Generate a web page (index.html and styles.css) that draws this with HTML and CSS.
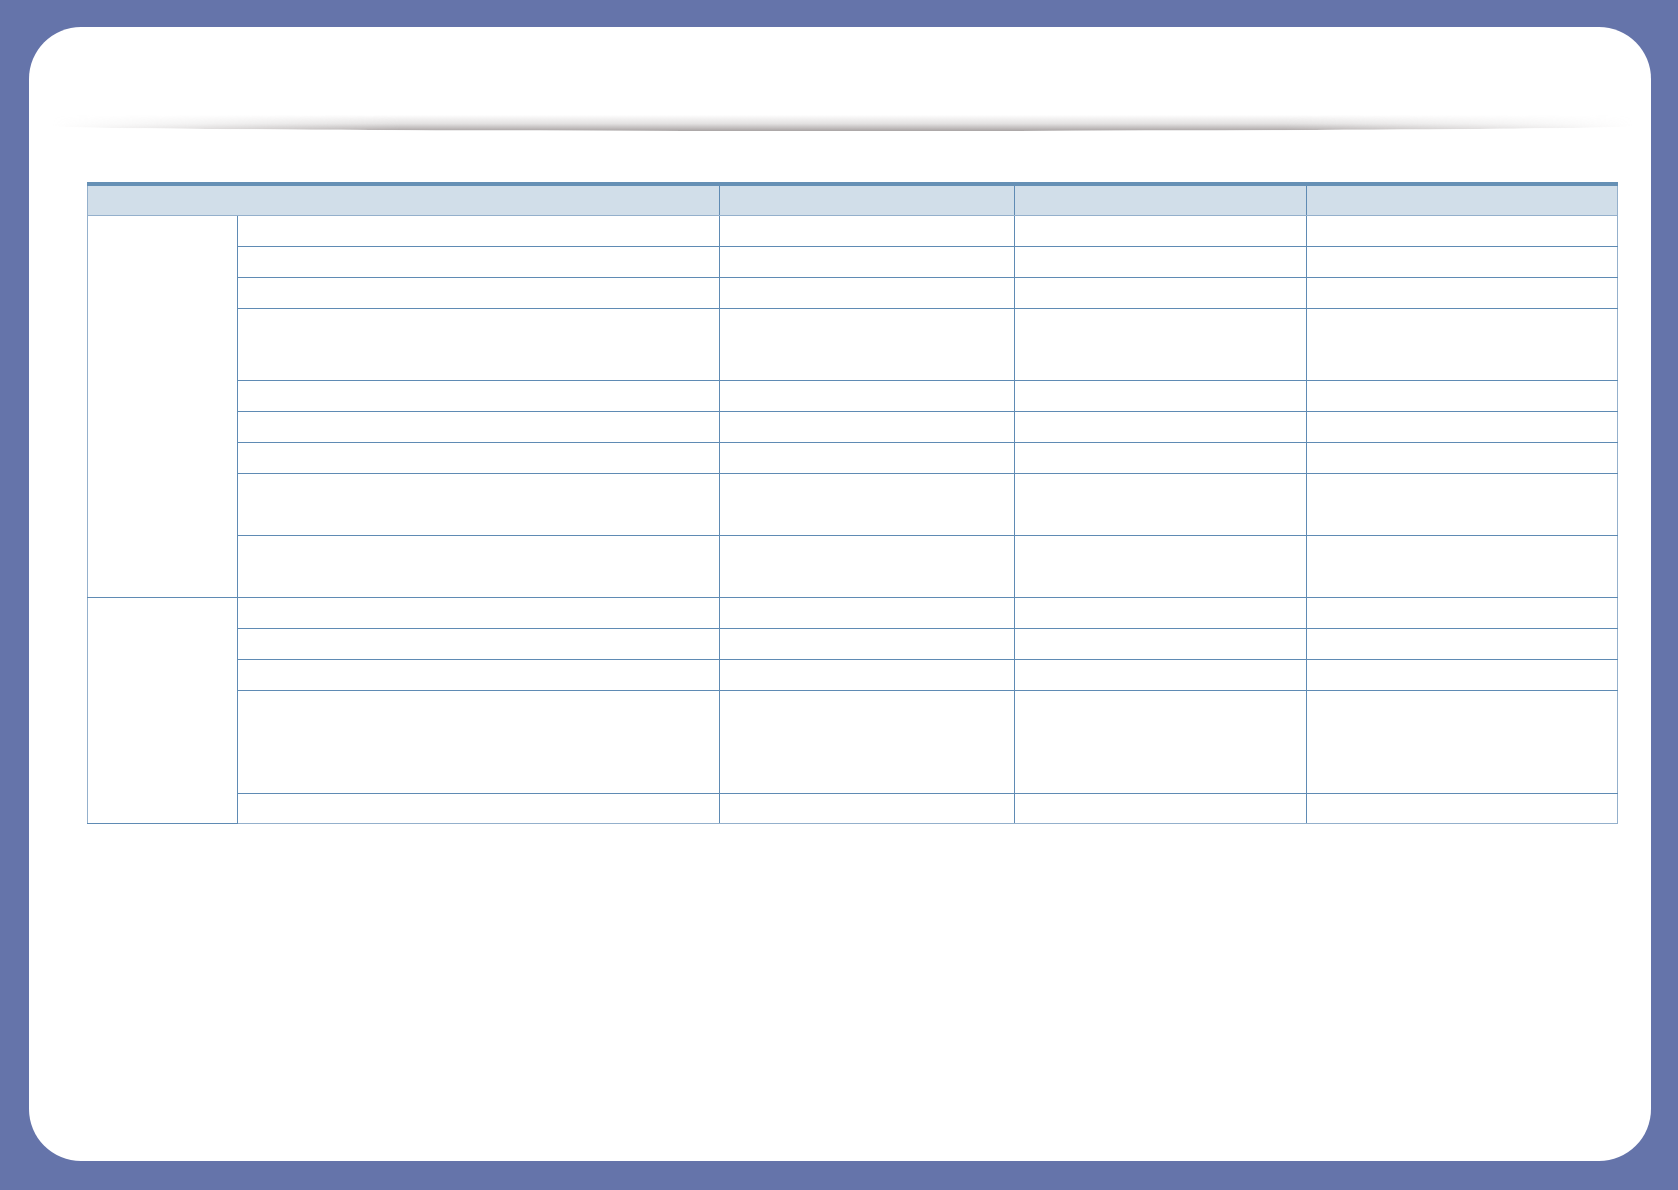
FILE: index.html
```html
<!DOCTYPE html>
<html lang="en">

<head>
    <meta charset="UTF-8">
    <title>Tabel</title>
    <link rel="stylesheet" href="styles.css">
</head>

<body>

    <div class="side">

        <div class="skygge"></div>

        <table class="tabel">
            <colgroup>
                <col class="k1">
                <col class="k2">
                <col class="k3">
                <col class="k4">
                <col class="k5">
            </colgroup>
            <thead>
                <tr>
                    <th colspan="2"></th>
                    <th></th>
                    <th></th>
                    <th></th>
                </tr>
            </thead>
            <tbody>
                <!-- gruppe 1 -->
                <tr class="r31">
                    <td class="gruppe" rowspan="9"></td>
                    <td></td><td></td><td></td><td></td>
                </tr>
                <tr class="r31"><td></td><td></td><td></td><td></td></tr>
                <tr class="r31"><td></td><td></td><td></td><td></td></tr>
                <tr class="r72"><td></td><td></td><td></td><td></td></tr>
                <tr class="r31"><td></td><td></td><td></td><td></td></tr>
                <tr class="r31"><td></td><td></td><td></td><td></td></tr>
                <tr class="r31"><td></td><td></td><td></td><td></td></tr>
                <tr class="r62"><td></td><td></td><td></td><td></td></tr>
                <tr class="r62"><td></td><td></td><td></td><td></td></tr>

                <!-- gruppe 2 -->
                <tr class="r31">
                    <td class="gruppe" rowspan="5"></td>
                    <td></td><td></td><td></td><td></td>
                </tr>
                <tr class="r31"><td></td><td></td><td></td><td></td></tr>
                <tr class="r31"><td></td><td></td><td></td><td></td></tr>
                <tr class="r103"><td></td><td></td><td></td><td></td></tr>
                <tr class="r30"><td></td><td></td><td></td><td></td></tr>
            </tbody>
        </table>

    </div>

</body>

</html>
```

FILE: styles.css
```css
* {
    margin: 0;
    padding: 0;
    box-sizing: border-box;
}

body {
    background-color: #6574aa;
    font-family: "Liberation Sans", Arial, sans-serif;
    height: 1190px;
    overflow: hidden;
}

.side {
    margin: 27px 27px 29px 29px;
    height: 1134px;
    background-color: #ffffff;
    border-radius: 52px;
    padding-top: 88px;
}

/* graa skygge under toppen */
.skygge {
    margin: 0 18px 0 23px;
    height: 16px;
    background: linear-gradient(to bottom, rgba(190, 186, 186, 0) 0%, rgba(190, 186, 186, 0.45) 55%, #b3aeae 92%, #a9a5a5 100%);
    border-radius: 0 0 50% 50% / 0 0 5px 5px;
    -webkit-mask-image: linear-gradient(to right, transparent 0%, #000 22%, #000 78%, transparent 100%);
    mask-image: linear-gradient(to right, transparent 0%, #000 22%, #000 78%, transparent 100%);
}

.tabel {
    margin: 51px 0 0 58px;
    width: 1530px;
    border-collapse: collapse;
    table-layout: fixed;
}

.k1 { width: 150px; }
.k2 { width: 482px; }
.k3 { width: 295px; }
.k4 { width: 292px; }
.k5 { width: 311px; }

.tabel th {
    height: 31px;
    background-color: #d1dee9;
    border-top: 4px solid #6690b5;
    border-bottom: 1px solid #94b0cc;
    border-left: 1px solid #5f8bb4;
    border-right: 1px solid #5f8bb4;
}

.tabel th:first-child {
    border-left: 1px solid #94b0cc;
}

.tabel th:last-child {
    border-right: 1px solid #94b0cc;
}

.tabel td {
    border: 1px solid #5f8bb4;
}

.tabel td.gruppe {
    border-left: 1px solid #94b0cc;
    border-bottom: 1px solid #5f8bb4;
}

.tabel tr td:last-child {
    border-right: 1px solid #94b0cc;
}

.tabel tbody tr:last-child td {
    border-bottom: 1px solid #94b0cc;
}

.tabel tbody tr:first-child td {
    border-top: 1px solid #94b0cc;
}

.r30 { height: 30px; }
.r31 { height: 31px; }
.r62 { height: 62px; }
.r72 { height: 72px; }
.r103 { height: 103px; }
```
